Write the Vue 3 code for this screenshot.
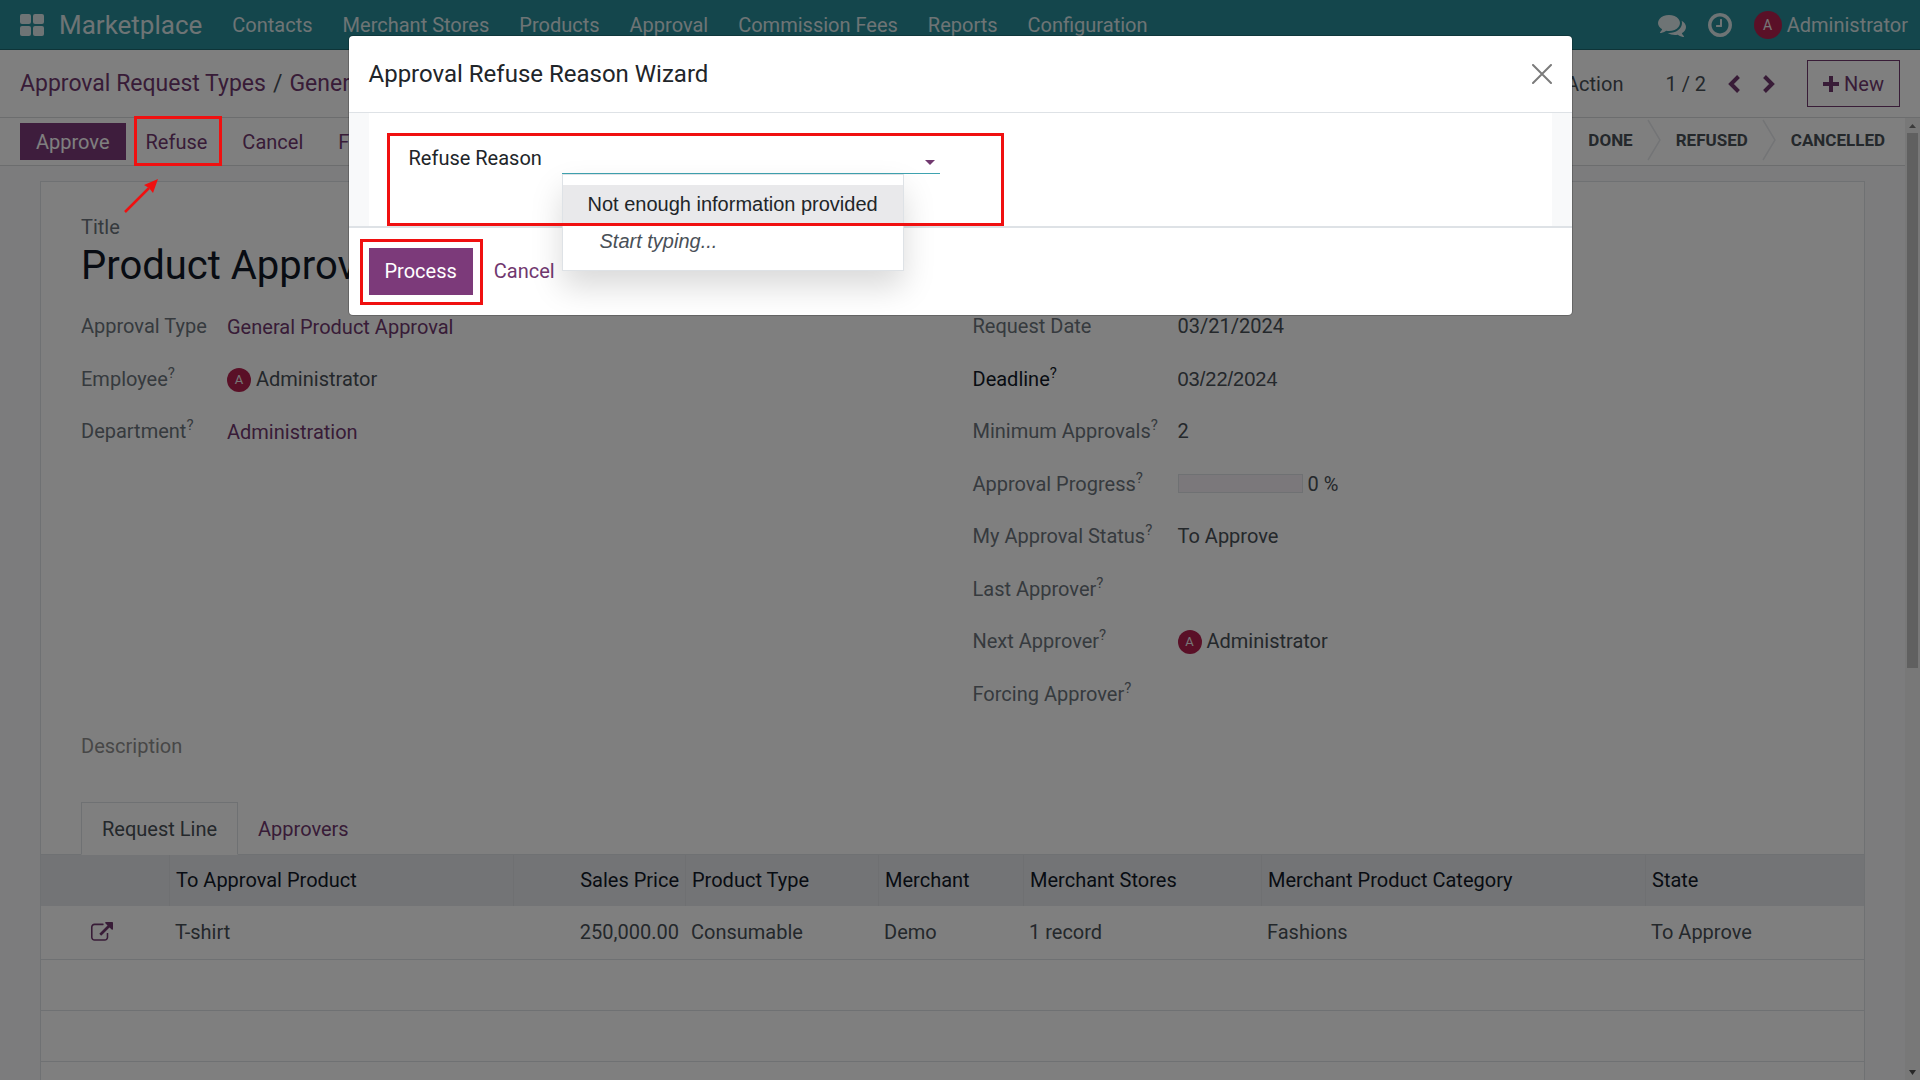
<script setup>
import { ref } from 'vue'

const menus = ['Contacts', 'Merchant Stores', 'Products', 'Approval', 'Commission Fees', 'Reports', 'Configuration']
const stages = ['Done', 'Refused', 'Cancelled']

const leftFields = [
  { label: 'Approval Type', kind: 'link', value: 'General Product Approval' },
  { label: 'Employee', help: true, kind: 'user', value: 'Administrator' },
  { label: 'Department', help: true, kind: 'link', value: 'Administration' },
]
const rightFields = [
  { label: 'Request Date', kind: 'text', value: '03/21/2024' },
  { label: 'Deadline', help: true, kind: 'input', value: '03/22/2024' },
  { label: 'Minimum Approvals', help: true, kind: 'text', value: '2' },
  { label: 'Approval Progress', help: true, kind: 'progress', value: 0 },
  { label: 'My Approval Status', help: true, kind: 'text', value: 'To Approve' },
  { label: 'Last Approver', help: true, kind: 'text', value: '' },
  { label: 'Next Approver', help: true, kind: 'user', value: 'Administrator' },
  { label: 'Forcing Approver', help: true, kind: 'text', value: '' },
]

const deadline = ref('03/22/2024')
const reason = ref('')
</script>

<template>
  <div class="app">
    <header class="navbar">
      <button class="icon-btn apps" aria-label="Apps">
        <svg width="24" height="22" viewBox="0 0 24 22" fill="currentColor">
          <rect width="11" height="10" rx="2" /><rect x="13" width="11" height="10" rx="2" />
          <rect y="12" width="11" height="10" rx="2" /><rect x="13" y="12" width="11" height="10" rx="2" />
        </svg>
      </button>
      <a class="brand" href="#">Marketplace</a>
      <nav class="menus">
        <a v-for="m in menus" :key="m" href="#">{{ m }}</a>
      </nav>
      <div class="systray">
        <button class="icon-btn" aria-label="Messages">
          <svg width="28" height="28" viewBox="0 0 1792 1792" fill="currentColor">
            <path d="M1408 768q0 139-94 257t-256.500 186.500-353.500 68.500q-86 0-176-16-124 88-278 128-36 9-86 16h-3q-11 0-20.500-8t-11.500-21q-1-3-1-6.500t.5-6.500 2-6l2.500-5 3.500-5.500 4-5 4.500-5 4-4.500q5-6 23-25t26-29.500 22.500-29 25-38.500 20.500-44q-124-72-195-177t-71-224q0-139 94-257t256.500-186.500 353.500-68.500 353.500 68.500 256.500 186.500 94 257zm384 256q0 120-71 224.500t-195 176.500q10 24 20.500 44t25 38.500 22.500 29 26 29.500 23 25q1 1 4 4.500t4.500 5 4 5 3.500 5.500l2.500 5 2 6 .5 6.500-1 6.500q-3 14-13 22t-22 7q-50-7-86-16-154-40-278-128-90 16-176 16-271 0-472-132 58 4 88 4 161 0 309-45t264-129q125-92 192-212t67-254q0-77-23-152 129 71 204 178t75 230z" />
          </svg>
        </button>
        <button class="icon-btn" aria-label="Activities">
          <svg width="28" height="28" viewBox="0 0 1792 1792" fill="currentColor">
            <path d="M1024 544v448q0 14-9 23t-23 9h-320q-14 0-23-9t-9-23v-64q0-14 9-23t23-9h224v-352q0-14 9-23t23-9h64q14 0 23 9t9 23zm416 352q0-148-73-273t-198-198-273-73-273 73-198 198-73 273 73 273 198 198 273 73 273-73 198-198 73-273zm224 0q0 209-103 385.500t-279.500 279.500-385.500 103-385.500-103-279.500-279.500-103-385.500 103-385.500 279.500-279.500 385.500-103 385.500 103 279.500 279.500 103 385.500z" />
          </svg>
        </button>
        <button class="account"><span class="avatar large">A</span>Administrator</button>
      </div>
    </header>

    <section class="control">
      <nav class="crumbs">
        <a href="#">Approval Request Types</a><span>/</span><a href="#">General Product Approval</a>
      </nav>
      <button class="plain action">Action</button>
      <span class="pager">1 / 2</span>
      <button class="icon-btn purple" aria-label="Previous">
        <svg width="12" height="18" viewBox="0 0 12 18" fill="none" stroke="currentColor" stroke-width="4"><path d="M10.500 1.500 3 9l7.500 7.500" /></svg>
      </button>
      <button class="icon-btn purple next" aria-label="Next">
        <svg width="12" height="18" viewBox="0 0 12 18" fill="none" stroke="currentColor" stroke-width="4"><path d="M1.500 1.500 9 9l-7.500 7.500" /></svg>
      </button>
      <button class="new">
        <svg width="16" height="16" viewBox="0 0 16 16" fill="currentColor"><path d="M6 0h4v6h6v4h-6v6H6v-6H0V6h6z" /></svg>
        New
      </button>
    </section>

    <div class="scroller">
      <main class="content">
        <section class="statusbar">
          <button class="primary small">Approve</button>
          <span class="marked">
            <button class="flat">Refuse</button>
            <span class="mark mark-refuse"></span>
            <svg class="arrow" width="36" height="36" viewBox="0 0 36 36">
              <path d="M1 34 25 10" stroke="#f01010" stroke-width="2.500" fill="none" />
              <path d="M34 1 29 15 25 10 20 7z" fill="#f01010" />
            </svg>
          </span>
          <button class="flat">Cancel</button>
          <button class="flat">Force Approve</button>
          <ol class="stages">
            <li v-for="s in stages" :key="s">
              {{ s }}
              <svg width="14" height="42" viewBox="0 0 14 42" fill="none" stroke="#e7e9ed" stroke-width="1.500"><path d="M1 1 13 21 1 41" /></svg>
            </li>
          </ol>
        </section>

        <article class="sheet">
          <div class="form">
            <div class="title-label">Title</div>
            <h1>Product Approval</h1>
            <div class="groups">
              <dl v-for="(group, g) in [leftFields, rightFields]" :key="g" :class="['group', g ? 'right' : 'left']">
                <div v-for="f in group" :key="f.label" class="field">
                  <dt :class="{ strong: f.kind === 'input' }">
                    <label :for="f.kind === 'input' ? 'deadline' : undefined">{{ f.label }}<sup v-if="f.help">?</sup></label>
                  </dt>
                  <dd>
                    <a v-if="f.kind === 'link'" href="#">{{ f.value }}</a>
                    <template v-else-if="f.kind === 'user'"><span class="avatar">A</span>{{ f.value }}</template>
                    <input v-else-if="f.kind === 'input'" id="deadline" v-model="deadline" class="date" type="text" />
                    <template v-else-if="f.kind === 'progress'">
                      <span class="bar"><span :style="{ width: f.value + '%' }"></span></span>{{ f.value }} %
                    </template>
                    <template v-else>{{ f.value }}</template>
                  </dd>
                </div>
              </dl>
            </div>
            <div class="description">Description</div>
          </div>

          <div class="tabs" role="tablist">
            <button class="tab active" role="tab">Request Line</button>
            <button class="tab" role="tab">Approvers</button>
          </div>
          <table>
            <colgroup>
              <col class="c0" /><col class="c1" /><col class="c2" /><col class="c3" />
              <col class="c4" /><col class="c5" /><col class="c6" /><col class="c7" />
            </colgroup>
            <thead>
              <tr>
                <th></th><th>To Approval Product</th><th class="num">Sales Price</th><th>Product Type</th>
                <th>Merchant</th><th>Merchant Stores</th><th>Merchant Product Category</th><th>State</th>
              </tr>
            </thead>
            <tbody>
              <tr>
                <td class="open">
                  <button class="icon-btn purple" aria-label="Open record">
                    <svg width="22" height="22" viewBox="0 0 1792 1792" fill="currentColor">
                      <path d="M1408 928v320q0 119-84.500 203.500t-203.500 84.500h-832q-119 0-203.500-84.500t-84.500-203.500v-832q0-119 84.500-203.500t203.500-84.500h704q14 0 23 9t9 23v64q0 14-9 23t-23 9h-704q-66 0-113 47t-47 113v832q0 66 47 113t113 47h832q66 0 113-47t47-113v-320q0-14 9-23t23-9h64q14 0 23 9t9 23zm384-864v512q0 26-19 45t-45 19-45-19l-176-176-652 652q-10 10-23 10t-23-10l-114-114q-10-10-10-23t10-23l652-652-176-176q-19-19-19-45t19-45 45-19h512q26 0 45 19t19 45z" />
                    </svg>
                  </button>
                </td>
                <td>T-shirt</td><td class="num">250,000.00</td><td>Consumable</td>
                <td>Demo</td><td>1 record</td><td>Fashions</td><td>To Approve</td>
              </tr>
              <tr v-for="n in 3" :key="n" class="blank"><td colspan="8"></td></tr>
            </tbody>
          </table>
        </article>
      </main>
      <div class="scrollbar">
        <svg width="15" height="15" viewBox="0 0 15 15"><path d="M4 10h7L7.500 6z" fill="#777" /></svg>
        <div class="thumb"></div>
        <svg class="down" width="15" height="15" viewBox="0 0 15 15"><path d="M4 5h7L7.500 10z" fill="#505050" /></svg>
      </div>
    </div>

    <div class="backdrop">
      <section class="modal" role="dialog" aria-labelledby="wizard-title">
        <header>
          <h2 id="wizard-title">Approval Refuse Reason Wizard</h2>
          <button class="icon-btn close" aria-label="Close">
            <svg width="20" height="20" viewBox="0 0 20 20" stroke="currentColor" stroke-width="2" stroke-linecap="round"><path d="M1 1 19 19M19 1 1 19" /></svg>
          </button>
        </header>
        <div class="modal-body">
          <div class="modal-sheet">
            <label for="reason">Refuse Reason</label>
            <div class="combo">
              <input id="reason" v-model="reason" type="text" autocomplete="off" />
              <svg width="10" height="5" viewBox="0 0 10 5"><path d="M0 0h10L5 5z" fill="#71386f" /></svg>
              <ul class="options">
                <li class="active">Not enough information provided</li>
                <li class="hint">Start typing...</li>
              </ul>
            </div>
            <span class="mark mark-reason"></span>
          </div>
        </div>
        <footer>
          <span class="marked">
            <button class="primary">Process</button>
            <span class="mark mark-process"></span>
          </span>
          <button class="flat">Cancel</button>
        </footer>
      </section>
    </div>
  </div>
</template>

<style>
body {
  margin: 0;
  overflow: hidden;
}
</style>

<style scoped>
.app {
  position: relative;
  display: flex;
  flex-direction: column;
  height: 100vh;
  overflow: hidden;
  background: #fff;
  color: #495057;
  font: 20px/30px Roboto, sans-serif;
}
* {
  box-sizing: border-box;
}
button {
  padding: 0;
  border: 0;
  background: none;
  color: inherit;
  font: inherit;
  white-space: nowrap;
}
a {
  color: #71386f;
  text-decoration: none;
}
svg {
  display: block;
  flex: none;
}
.icon-btn {
  display: flex;
  align-items: center;
}
.purple {
  color: #71386f;
}

/* Top navigation */
.navbar {
  display: flex;
  flex: none;
  align-items: center;
  height: 50px;
  padding: 0 12px 0 20px;
  border-bottom: 1px solid #1d6870;
  background: #288c98;
  color: #dce8ea;
}
.navbar a {
  color: inherit;
}
.brand {
  margin-left: 15px;
  font-size: 26px;
}
.menus {
  display: flex;
  gap: 30px;
  margin-left: 30px;
}
.systray {
  display: flex;
  align-items: center;
  gap: 20px;
  margin-left: auto;
}
.account {
  display: flex;
  align-items: center;
  gap: 5px;
}
.avatar {
  display: inline-flex;
  align-items: center;
  justify-content: center;
  width: 24px;
  height: 24px;
  margin-right: 5px;
  border-radius: 50%;
  background: #b4214e;
  color: #eee;
  font-size: 13px;
  line-height: 24px;
  vertical-align: 2px;
}
.avatar.large {
  width: 28px;
  height: 28px;
  margin: 0;
  font-size: 14px;
}

/* Control panel */
.control {
  display: flex;
  flex: none;
  align-items: center;
  height: 68px;
  padding: 0 20px;
  border-bottom: 1px solid #d8dadd;
}
.crumbs {
  display: flex;
  gap: 7px;
  font-size: 23px;
}
.action {
  margin-left: auto;
}
.pager {
  margin: 0 22px 0 42px;
}
.next {
  margin: 0 32px 0 23px;
}
.new {
  display: flex;
  align-items: center;
  gap: 5px;
  height: 47px;
  padding: 0 15px;
  border: 1px solid #71386f;
  color: #71386f;
}

/* Scrolling part */
.scroller {
  display: flex;
  flex: 1;
  min-height: 0;
}
.content {
  flex: 1;
  min-width: 0;
  background: #f8f9fa;
}
.scrollbar {
  display: flex;
  flex: none;
  flex-direction: column;
  align-items: center;
  width: 15px;
  background: #f1f1f1;
}
.thumb {
  width: 11px;
  height: 535px;
  background: #c1c1c1;
}
.down {
  margin-top: auto;
}
.statusbar {
  display: flex;
  align-items: center;
  height: 48px;
  padding: 0 20px;
  border-bottom: 1px solid #d8dadd;
  background: #fff;
}
.primary {
  height: 47px;
  padding: 0 16px;
  background: #7c3a7a;
  color: #fff;
}
.primary.small {
  height: 37px;
  margin-right: 4px;
}
.flat {
  height: 37px;
  padding: 0 16px;
  margin-right: 3px;
  color: #71386f;
}
.marked {
  position: relative;
  display: flex;
}
.mark {
  position: absolute;
  z-index: 3;
  border: 3px solid #f01010;
  pointer-events: none;
}
.mark-refuse {
  inset: -7px 4px -6px 4px;
}
.mark-process {
  inset: -9px -10px -10px -9px;
}
.mark-reason {
  inset: 20px auto 0 18px;
  width: 617px;
}
.arrow {
  position: absolute;
  top: 55px;
  left: -6px;
  z-index: 3;
}
.stages {
  display: flex;
  gap: 43px;
  margin: 0 0 4px auto;
  padding: 0;
  font-size: 17px;
  font-weight: 700;
  line-height: 42px;
  text-transform: uppercase;
  list-style: none;
}
.stages li {
  position: relative;
}
.stages svg {
  position: absolute;
  top: 0;
  left: calc(100% + 14px);
}
.stages li:last-child svg {
  display: none;
}

/* Record sheet */
.sheet {
  height: 1200px;
  margin: 15px 40px 0;
  border: 1px solid #dee2e6;
  background: #fff;
}
.form {
  padding: 30px 40px 0;
}
.title-label {
  color: #6c757d;
}
h1 {
  margin: 0 0 21px;
  color: #111827;
  font-size: 40px;
  font-weight: 400;
  line-height: 48px;
}
.groups {
  display: grid;
  grid-template-columns: 1fr 1fr;
}
.group {
  display: grid;
  grid-template-rows: repeat(8, 1fr);
  height: 420px;
  margin: 0;
}
.right {
  padding-left: 20px;
}
.field {
  display: flex;
}
dt {
  width: 146px;
  color: #6c757d;
  white-space: nowrap;
}
.right dt {
  width: 205px;
}
dt.strong {
  color: #111827;
}
dd {
  display: block;
  margin: 0;
  white-space: nowrap;
}
dd a {
  display: block;
  margin-top: 1px;
}
sup {
  font-size: 15px;
  line-height: 0;
}
.date {
  width: 160px;
  height: 30px;
  padding: 0;
  border: 0;
  background: none;
  color: inherit;
  font: 20px/30px "Liberation Sans", Arial, sans-serif;
}
.bar {
  display: inline-block;
  width: 125px;
  height: 19px;
  margin-right: 5px;
  border: 1px solid #dee2e6;
  background: #f6f1f6;
  vertical-align: -2px;
}
.bar span {
  display: block;
  height: 100%;
  background: #71386f;
}
.description {
  height: 71px;
  color: #8f8f8f;
}
.tabs {
  position: relative;
  display: flex;
  height: 53px;
  padding: 0 40px;
  border-bottom: 1px solid #dee2e6;
}
.tab {
  height: 53px;
  padding: 0 20px;
  color: #71386f;
}
.tab.active {
  border: 1px solid #dee2e6;
  border-bottom-color: #fff;
  background: #fff;
  color: #495057;
}
table {
  width: 100%;
  border-spacing: 0;
  table-layout: fixed;
}
.c0 { width: 128px; }
.c1 { width: 344px; }
.c2 { width: 172px; }
.c3 { width: 193px; }
.c4 { width: 145px; }
.c5 { width: 238px; }
.c6 { width: 384px; }
th,
td {
  padding: 0 6px 2px;
  text-align: left;
  white-space: nowrap;
}
th {
  height: 51px;
  border-left: 1px solid #dee0e4;
  background: #e7e9ed;
  color: #111827;
  font-weight: 400;
}
th:first-child {
  border-left: 0;
}
td {
  height: 51px;
  border-bottom: 1px solid #dee2e6;
}
tbody tr:first-child td {
  height: 54px;
}
.num {
  text-align: right;
}
td.open {
  padding: 0 0 0 50px;
}

/* Dialog */
.backdrop {
  position: absolute;
  inset: 0;
  z-index: 1;
  padding: 36px 20px;
  background: rgba(0, 0, 0, 0.5);
}
.modal {
  max-width: 1223px;
  margin: 0 auto;
  border-radius: 4px;
  background: #fff;
  box-shadow: 0 0 0 1px rgba(0, 0, 0, 0.2);
  color: #212529;
}
.modal header {
  display: flex;
  align-items: center;
  justify-content: space-between;
  height: 77px;
  padding: 0 20px;
  border-bottom: 1px solid #dee2e6;
}
h2 {
  margin: 0;
  font-size: 24px;
  font-weight: 400;
}
.close {
  color: #7b7b7b;
}
.modal-body {
  padding: 0 20px;
  background: #f8f9fa;
}
.modal-sheet {
  position: relative;
  display: flex;
  height: 113px;
  padding: 30px 40px 0;
  background: #fff;
}
.modal-sheet label {
  width: 153px;
}
.combo {
  position: relative;
  width: 378px;
}
.combo input {
  display: block;
  width: 100%;
  height: 31px;
  padding: 0 20px 0 0;
  border: 0;
  border-bottom: 1px solid #3fa3b0;
  outline: 0;
  background: none;
  font: 20px/30px "Liberation Sans", Arial, sans-serif;
}
.combo svg {
  position: absolute;
  top: 17px;
  right: 5px;
}
.options {
  position: absolute;
  top: 31px;
  left: 0;
  z-index: 2;
  width: 342px;
  height: 97px;
  margin: 0;
  padding: 10px 0;
  border: 1px solid #dee2e6;
  background: #fff;
  box-shadow: 0 16px 30px rgba(0, 0, 0, 0.15);
  font: 20px/38px "Liberation Sans", Arial, sans-serif;
  list-style: none;
  white-space: nowrap;
}
.options .active {
  padding-left: 25px;
  background: #e9e9eb;
}
.options .hint {
  padding-left: 37px;
  color: #495057;
  font-style: italic;
  line-height: 36px;
}
.modal footer {
  display: flex;
  align-items: center;
  gap: 5px;
  height: 89px;
  padding: 0 20px;
  border-top: 2px solid #dee2e6;
}
.modal footer button {
  padding-bottom: 2px;
}
</style>
